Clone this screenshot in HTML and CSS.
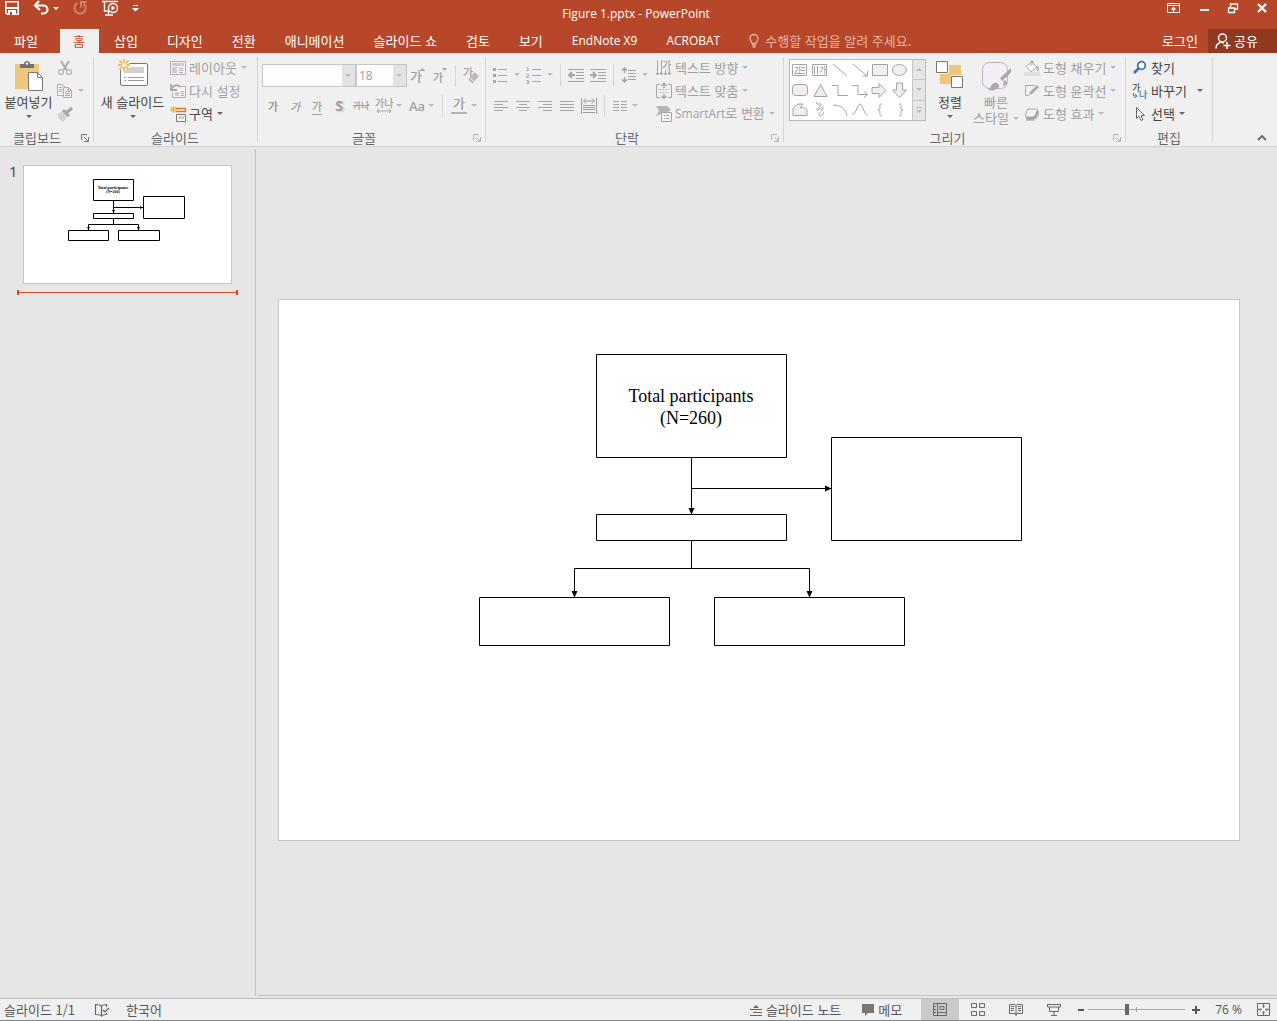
FILE: index.html
```html
<!DOCTYPE html>
<html lang="ko">
<head>
<meta charset="utf-8">
<meta name="viewport" content="width=device-width, initial-scale=1">
<title>Figure 1.pptx - PowerPoint</title>
<link rel="stylesheet" href="styles.css">
</head>
<body>
<header class="app-header">
  <div class="title-bar">
    <div class="quick-access">
      <button class="qa-btn" aria-label="저장"><svg width="16" height="16" viewBox="0 0 16 16"><path d="M1.800 1.800h12.400v12.400H3.200L1.800 12.800z" fill="none" stroke="#fff" stroke-width="1.600"/><path d="M1 7h14v2H1zM4 10h8v5H4z" fill="#fff"/><path d="M6 12h2v3H6z" fill="#b7472a"/></svg></button>
      <button class="qa-btn undo" aria-label="실행 취소"><svg width="16" height="16" viewBox="0 0 16 16"><path d="M6 1L2 5.500 7 10M2.500 5.500h8a4 4 0 0 1 0 8H8" fill="none" stroke="#fff" stroke-width="2.200"/></svg><i class="caret white"></i></button>
      <button class="qa-btn" disabled aria-label="다시 실행"><svg width="16" height="16" viewBox="0 0 16 16"><path d="M5.500 3A5.600 5.600 0 1 0 11.500 3.500M9 7.500V2h5.500" fill="none" stroke="#d0806c" stroke-width="2"/></svg></button>
      <button class="qa-btn" aria-label="슬라이드 쇼 시작"><svg width="18" height="16" viewBox="0 0 18 16"><path d="M1 1.500h16M3.500 2v9h5M7.500 11v3M4 15h8" fill="none" stroke="#fff" stroke-width="1.400"/><circle cx="12" cy="8" r="4.500" fill="#b7472a" stroke="#fff" stroke-width="1.300"/><path d="M10.500 5.500l4 2.500-4 2.500z" fill="#fff"/></svg></button>
      <button class="qa-btn" aria-label="빠른 실행 도구 모음 사용자 지정"><svg width="7" height="7" viewBox="0 0 7 7"><path d="M1 0h5v1H1zM0 3h7L3.500 6.500z" fill="#fff"/></svg></button>
    </div>
    <h1 class="window-title">Figure 1.pptx - PowerPoint</h1>
    <div class="window-controls">
      <button aria-label="리본 메뉴 표시 옵션"><svg width="14" height="12" viewBox="0 0 14 12"><path d="M.5 1.500h12v9H.5zM.5 3.500h12" fill="none" stroke="#fff"/><path d="M6.500 10V5.500M4.500 7.500l2-2 2 2" fill="none" stroke="#fff" stroke-width="1.200"/></svg></button>
      <button aria-label="최소화"><svg width="12" height="12" viewBox="0 0 12 12"><path d="M2 7h9v2H2z" fill="#fff"/></svg></button>
      <button aria-label="이전 크기로 복원"><svg width="12" height="12" viewBox="0 0 12 12"><path d="M3.500 5V2h7v5H8M3 2h8M1.500 6h6v4.500h-6zM1 5.800h7" fill="none" stroke="#fff" stroke-width="1.300"/></svg></button>
      <button aria-label="닫기"><svg width="12" height="12" viewBox="0 0 12 12"><path d="M2 2l8 8M10 2l-8 8" stroke="#fff" stroke-width="2.300"/></svg></button>
    </div>
  </div>
  <nav class="tabs" aria-label="리본 탭">
    <button class="tab file">파일</button>
    <button class="tab active">홈</button>
    <button class="tab">삽입</button>
    <button class="tab">디자인</button>
    <button class="tab">전환</button>
    <button class="tab">애니메이션</button>
    <button class="tab">슬라이드 쇼</button>
    <button class="tab">검토</button>
    <button class="tab">보기</button>
    <button class="tab latin">EndNote X9</button>
    <button class="tab latin">ACROBAT</button>
    <button class="tab tell-me"><svg width="10" height="14" viewBox="0 0 10 14"><path d="M3.200 9.500C3 8 1 7 1 4.500a4 4 0 0 1 8 0C9 7 7 8 6.800 9.500zM3 11.200h4M3.500 13h3" fill="none" stroke="#eab5a6" stroke-width="1.300"/></svg>수행할 작업을 알려 주세요.</button>
    <button class="tab login">로그인</button>
    <button class="tab share"><svg width="16" height="16" viewBox="0 0 16 16"><circle cx="7.500" cy="5" r="4" fill="none" stroke="#fff" stroke-width="1.500"/><path d="M1 15.500c0-3 2-5.500 5-6.500l3 1M8.500 12.500h7M12 9v7" fill="none" stroke="#fff" stroke-width="1.500"/></svg>공유</button>
  </nav>
</header>

<section class="ribbon" aria-label="홈 리본">
  <div class="group clipboard">
    <div class="group-body">
      <button class="big"><svg width="32" height="32" viewBox="0 0 32 32"><path d="M2 4h24v25H2z" fill="#eec77e"/><path d="M7 8V4h4c0-4 6-4 6 0h4v4z" fill="#707070"/><circle cx="14" cy="3.500" r="1.200" fill="#f0f0f0"/><path d="M15.500 12.500h9l5 5v13h-14z" fill="#fff" stroke="#777"/><path d="M24.500 12.500v5h5" fill="none" stroke="#777"/></svg><span>붙여넣기</span><i class="caret"></i></button>
      <div class="stack">
        <button class="row" disabled aria-label="잘라내기"><svg width="16" height="16" viewBox="0 0 16 16"><path d="M4 1l5.500 9M12 1L6.500 10" stroke="#aaa" stroke-width="2"/><circle cx="4" cy="12" r="2.400" fill="none" stroke="#b4b4b4" stroke-width="1.300"/><circle cx="12" cy="12" r="2.400" fill="none" stroke="#b4b4b4" stroke-width="1.300"/></svg></button>
        <button class="row" disabled aria-label="복사"><svg width="16" height="16" viewBox="0 0 16 16"><g fill="#f5eff5" stroke="#b0a9b0"><path d="M.5 1.500h5l3 3v8h-8z"/><path d="M6.500 4.500h5l3 3v7h-8z"/></g><path d="M2 4.500h3M2 6.500h3M2 8.500h3M8 8.500h5M8 10.500h5M8 12.500h5M11.500 4.500v3h3" fill="none" stroke="#b0a9b0"/></svg><i class="caret"></i></button>
        <button class="row" disabled aria-label="서식 복사"><svg width="16" height="16" viewBox="0 0 16 16"><path d="M1 8l5-3 5 5-5 6-5-4z" fill="#d4d0d4"/><path d="M6 4l6 6M9 7l6-5" stroke="#a6a6a6" stroke-width="3"/></svg></button>
      </div>
    </div>
    <div class="group-foot"><span>클립보드</span><button class="launcher on" aria-label="클립보드 창"><svg width="8" height="8" viewBox="0 0 8 8"><path d="M.5 6V.5H6M3 3l4 4M7.500 3v4.500H3" fill="none" stroke="currentColor"/></svg></button></div>
  </div>

  <div class="group slides">
    <div class="group-body">
      <button class="big"><svg width="32" height="32" viewBox="0 0 32 32"><rect x="3.500" y="3.500" width="27" height="22" rx="1.500" fill="#fff" stroke="#777"/><path d="M7 7h20v6H7z" fill="#d0d0d0"/><path d="M7 17.500h2M11 17.500h16M7 20.500h2M11 20.500h16" stroke="#999"/><circle cx="7" cy="5" r="6" fill="#f0f0f0"/><path d="M7-1v12M1 5h12M2.500.5l9 9M11.500.5l-9 9" stroke="#ecc06c" stroke-width="2"/><circle cx="7" cy="5" r="2" fill="#fff"/></svg><span>새 슬라이드</span><i class="caret"></i></button>
      <div class="stack">
        <button class="row" disabled><svg width="16" height="16" viewBox="0 0 16 16"><path d="M.5 1.500h15v13H.5z" fill="#f7f2f7" stroke="#b4aeb4"/><path d="M2 3h12v3H2zM2 7h5v6H2z" fill="#cfc8cf"/><path d="M9 8.500h4M9 10.500h4M9 12.500h4" stroke="#b4aeb4"/></svg><span>레이아웃</span><i class="caret"></i></button>
        <button class="row" disabled><svg width="16" height="16" viewBox="0 0 16 16"><path d="M9 3.500h6.500v11h-13V9" fill="#f7f2f7" stroke="#b4aeb4"/><path d="M5 9h4v4H5z" fill="#cfc8cf"/><path d="M11 8.500h3M11 10.500h3M11 12.500h3" stroke="#b4aeb4"/><path d="M1 1v6h6M1.500 6c2-4 6-5 9-2" fill="none" stroke="#aaa" stroke-width="1.800"/></svg><span>다시 설정</span></button>
        <button class="row"><svg width="16" height="16" viewBox="0 0 16 16"><path d="M6 2.500h9.500v3H6" fill="none" stroke="#e0792c" stroke-width="1.300"/><path d="M6.500 8.500h9v7h-9z" fill="#fff" stroke="#777"/><path d="M8 10h6v3H8z" fill="#d0d0d0"/><path d="M3.500 0v7M0 3.500h7M1 1l5 5M6 1L1 6" stroke="#e9b65a" stroke-width="1.100"/></svg><span>구역</span><i class="caret"></i></button>
      </div>
    </div>
    <div class="group-foot"><span>슬라이드</span></div>
  </div>

  <div class="group font">
    <div class="group-body two-rows">
      <div class="tools">
        <label class="combo family"><select disabled aria-label="글꼴"><option></option></select></label>
        <label class="combo size"><select disabled aria-label="글꼴 크기"><option>18</option></select></label>
        <button class="tool" disabled aria-label="글꼴 크기 크게"><svg width="16" height="18" viewBox="0 0 16 18"><text x="0" y="14" class="glyph g12">가</text><path d="M10 4h5l-2.500-3z" fill="#a6a6a6"/></svg></button>
        <button class="tool" disabled aria-label="글꼴 크기 작게"><svg width="16" height="18" viewBox="0 0 16 18"><text x="1" y="15" class="glyph g11">가</text><path d="M10 1h5l-2.500 3z" fill="#a6a6a6"/></svg></button>
        <i class="sep"></i>
        <button class="tool" disabled aria-label="모든 서식 지우기"><svg width="18" height="18" viewBox="0 0 18 18"><text x="1" y="10" class="glyph g11">가</text><path d="M6 12.500l6.500-7.500 4.500 4-6.500 7.500z" fill="#bfb9bf"/><path d="M7.500 10.500l4.500 4" stroke="#f0f0f0"/></svg></button>
      </div>
      <div class="tools">
        <button class="tool text bold" disabled aria-label="굵게">가</button>
        <button class="tool text italic" disabled aria-label="기울임꼴">가</button>
        <button class="tool text under" disabled aria-label="밑줄">가</button>
        <button class="tool text shadow" disabled aria-label="텍스트 그림자">S</button>
        <button class="tool text strike" disabled aria-label="취소선">가나</button>
        <button class="tool drop" disabled aria-label="문자 간격"><svg width="18" height="18" viewBox="0 0 18 18"><text x="0" y="10" class="glyph g10">가나</text><path d="M2 14h14M4 12l-2 2 2 2M14 12l2 2-2 2" fill="none" stroke="#a6a6a6"/></svg><i class="caret"></i></button>
        <button class="tool drop" disabled aria-label="대/소문자 바꾸기"><b class="aa">Aa</b><i class="caret"></i></button>
        <i class="sep"></i>
        <button class="tool drop" disabled aria-label="글꼴 색"><svg width="18" height="18" viewBox="0 0 18 18"><text x="3" y="11" class="glyph g12">가</text><path d="M1 15h16v2H1z" fill="#b4b4b4"/></svg><i class="caret"></i></button>
      </div>
    </div>
    <div class="group-foot"><span>글꼴</span><button class="launcher" disabled aria-label="글꼴 대화 상자"><svg width="8" height="8" viewBox="0 0 8 8"><path d="M.5 6V.5H6M3 3l4 4M7.500 3v4.500H3" fill="none" stroke="currentColor"/></svg></button></div>
  </div>

  <div class="group paragraph">
    <div class="group-body">
      <div class="two-rows">
        <div class="tools">
          <button class="tool drop" disabled aria-label="글머리 기호"><svg width="16" height="16" viewBox="0 0 16 16"><path d="M0 1h3v3H0zM0 7h3v3H0zM0 13h3v3H0z" fill="#a6a6a6"/><path d="M5 2.500h9M5 8.500h9M5 14.500h9" stroke="#a6a6a6"/></svg><i class="caret"></i></button>
          <button class="tool drop" disabled aria-label="번호 매기기"><svg width="16" height="18" viewBox="0 0 16 18"><text x="0" y="5" class="glyph g7">1</text><text x="0" y="12" class="glyph g7">2</text><text x="0" y="18" class="glyph g7">3</text><path d="M6 3.500h9M6 9.500h9M6 15.500h9" stroke="#a6a6a6"/></svg><i class="caret"></i></button>
          <i class="sep"></i>
          <button class="tool" disabled aria-label="목록 수준 줄임"><svg width="16" height="14" viewBox="0 0 16 14"><path d="M0 1.500h16M8 4.500h8M8 7.500h8M8 10.500h8M0 13.500h16" stroke="#a6a6a6"/><path d="M7 7H2M4 4L1 7l3 3" fill="none" stroke="#a6a6a6" stroke-width="1.800"/></svg></button>
          <button class="tool" disabled aria-label="목록 수준 늘림"><svg width="16" height="14" viewBox="0 0 16 14"><path d="M0 1.500h16M8 4.500h8M8 7.500h8M8 10.500h8M0 13.500h16" stroke="#a6a6a6"/><path d="M0 7h5M3 4l3 3-3 3" fill="none" stroke="#a6a6a6" stroke-width="1.800"/></svg></button>
          <i class="sep"></i>
          <button class="tool drop" disabled aria-label="줄 간격"><svg width="16" height="16" viewBox="0 0 16 16"><path d="M3.500 1v5M1 3.500L3.500 1 6 3.500M3.500 10v5M1 12.500L3.500 15 6 12.500" fill="none" stroke="#a6a6a6" stroke-width="1.500"/><path d="M7 3.500h8M7 6.500h8M7 9.500h8M7 12.500h8" stroke="#a6a6a6"/></svg><i class="caret"></i></button>
        </div>
        <div class="tools">
          <button class="tool" disabled aria-label="왼쪽 맞춤"><svg width="14" height="12" viewBox="0 0 14 12"><path d="M0 1.500h14M0 4.500h9M0 7.500h14M0 10.500h9" stroke="#a6a6a6"/></svg></button>
          <button class="tool" disabled aria-label="가운데 맞춤"><svg width="14" height="12" viewBox="0 0 14 12"><path d="M0 1.500h14M3 4.500h8M0 7.500h14M3 10.500h8" stroke="#a6a6a6"/></svg></button>
          <button class="tool" disabled aria-label="오른쪽 맞춤"><svg width="14" height="12" viewBox="0 0 14 12"><path d="M0 1.500h14M5 4.500h9M0 7.500h14M5 10.500h9" stroke="#a6a6a6"/></svg></button>
          <button class="tool" disabled aria-label="양쪽 맞춤"><svg width="14" height="12" viewBox="0 0 14 12"><path d="M0 1.500h14M0 4.500h14M0 7.500h14M0 10.500h14" stroke="#a6a6a6"/></svg></button>
          <button class="tool" disabled aria-label="균등 분할"><svg width="16" height="16" viewBox="0 0 16 16"><path d="M.5 0v16M15.500 0v16M2 7.500h12M2 9.500h12M2 11.500h12M2 14.500h12M3 3h10M5 .5L2.500 3 5 5.500M11 .5L13.500 3 11 5.500" fill="none" stroke="#9e9a9e"/></svg></button>
          <i class="sep"></i>
          <button class="tool drop" disabled aria-label="열 추가 또는 제거"><svg width="14" height="12" viewBox="0 0 14 12"><path d="M0 1.500h6M8 1.500h6M0 4.500h6M8 4.500h6M0 7.500h6M8 7.500h6M0 10.500h6M8 10.500h6" stroke="#a6a6a6"/></svg><i class="caret"></i></button>
        </div>
      </div>
      <div class="stack">
        <button class="row" disabled><svg width="16" height="16" viewBox="0 0 16 16"><path d="M1.500 0v15M5.500 0v15M9.500 10v5M13.500 10v5M0 13l1.500 2L3 13M4 13l1.500 2L7 13M8 13l1.500 2 1.500-2M12 13l1.500 2 1.500-2" fill="none" stroke="#a6a6a6"/><text x="6" y="9" class="glyph g10">가</text></svg><span>텍스트 방향</span><i class="caret"></i></button>
        <button class="row" disabled><svg width="16" height="16" viewBox="0 0 16 16"><path d="M4 1.500H.5v13H4M12 1.500h3.500v13H12" fill="none" stroke="#a9a3a9"/><path d="M8 0v5M5.500 3L8 .5 10.500 3M8 11v5M5.500 13L8 15.500 10.500 13" fill="none" stroke="#a6a6a6" stroke-width="1.400"/><path d="M3 6.500h10M3 9.500h10" stroke="#bbb" stroke-dasharray="2 1"/></svg><span>텍스트 맞춤</span><i class="caret"></i></button>
        <button class="row" disabled><svg width="16" height="16" viewBox="0 0 16 16"><path d="M0 0h11l4 4-3 2H5v2L0 10l3-5z" fill="#b4b4b4"/><path d="M5.500 6.500h10v9h-10z" fill="#f7f0f7" stroke="#a9a3a9"/><path d="M8 9.500h1M10 9.500h3M8 12.500h1M10 12.500h3" stroke="#a9a3a9"/></svg><span><span class="latin">SmartArt</span>로 변환</span><i class="caret"></i></button>
      </div>
    </div>
    <div class="group-foot"><span>단락</span><button class="launcher" disabled aria-label="단락 대화 상자"><svg width="8" height="8" viewBox="0 0 8 8"><path d="M.5 6V.5H6M3 3l4 4M7.500 3v4.500H3" fill="none" stroke="currentColor"/></svg></button></div>
  </div>

  <div class="group drawing">
    <div class="group-body">
      <div class="gallery">
        <svg width="122" height="60" viewBox="0 0 122 60" role="img" aria-label="도형">
          <g fill="none" stroke="#a6a2a6">
            <path d="M2.500 4.500h14v11h-14zM11 7.500h4M11 10.500h4M4 13.500h11M22.500 4.500h14v11h-14zM24.500 6v8M27.500 6v8M43 4l14 12M63 4l14 12M77.500 11v5h-5"/>
            <g fill="#f3ecf5"><path d="M82.500 4.500h15v11h-15z"/><ellipse cx="109.500" cy="10" rx="7" ry="5.500"/><rect x="2.500" y="24.500" width="15" height="11" rx="3"/><path d="M24 36.500L30.500 24.500 37 36.500zM82 27.500h7v-4l7 7-7 7v-4h-7zM106.500 23v7h-4l7 7.500 7-7.500h-4v-7z"/><path d="M3 55.500V48l5-4h5l-3 4c3-1 7 0 7 3v4.500z"/></g>
            <path d="M42 25.500h6v10h10M62 25.500h6v9h9M74 31.500l3.500 3-3.500 3M27 42c-3 5 7-1 3 4-4 4-5 6 1 2 6-3-2 5-2 7 1 2 6-1 4-3M43 45c8 0 13 4 14 11M62 54c5 0 5-10 8-10s4 12 8 11"/>
            <path d="M92 44c-3 0-2 1-2 3s0 2-2 3c2 0 2 2 2 3s-1 3 2 3M109 44c3 0 2 1 2 3s0 2 2 3c-2 0-2 2-2 3s1 3-2 3"/>
          </g>
          <text x="4" y="13" class="glyph g8">가</text><text x="29" y="13" class="glyph g8">가</text>
        </svg>
        <div class="scroller">
          <button disabled aria-label="위로"><i class="caret up"></i></button>
          <button disabled aria-label="아래로"><i class="caret"></i></button>
          <button class="more" disabled aria-label="자세히"><i class="bar"></i><i class="caret"></i></button>
        </div>
      </div>
      <button class="big arrange"><svg width="32" height="32" viewBox="0 0 32 32"><path d="M15 5h12v10H15zM6 14h11v10H6z" fill="#eec77e"/><path d="M2.500 1.500h11v11h-11zM17.500 16.500h11v11h-11z" fill="#fff" stroke="#777"/></svg><span>정렬</span><i class="caret"></i></button>
      <button class="big styles" disabled><svg width="32" height="32" viewBox="0 0 32 32"><rect x="2.500" y="2.500" width="25" height="26" rx="7" fill="#f3eef5" stroke="#b9b3b9"/><path d="M31 8L20 18l2 3c4-3 8-7 9-9zM8 30c3-2 3-6 6-7 3-1 6 2 5 4-2 3-7 4-11 3zM24 20c4 1 4 5-1 6" fill="#aaa"/></svg><span>빠른</span><span class="with-caret">스타일<i class="caret"></i></span></button>
      <div class="stack">
        <button class="row" disabled><svg width="16" height="16" viewBox="0 0 16 16"><path d="M2 6.500L8 2l5 5-6 5z" fill="#fff" stroke="#aaa"/><path d="M7 6V1h2v4M13 6c2 1 2 3 1 5-1-1-1-3-1-5z" fill="none" stroke="#aaa"/><path d="M0 12h16v4H0z" fill="#e4dde4"/></svg><span>도형 채우기</span><i class="caret"></i></button>
        <button class="row" disabled><svg width="16" height="16" viewBox="0 0 16 16"><path d="M11 2.500H1.500v10H5" fill="none" stroke="#aaa"/><path d="M5 12l1-3 7-7 2 2-7 7z" fill="#aaa"/></svg><span>도형 윤곽선</span><i class="caret"></i></button>
        <button class="row" disabled><svg width="16" height="16" viewBox="0 0 16 16"><path d="M5 5h10v5l-5 5H2z" fill="#c6c2c6"/><path d="M4 3h8q2 0 1.500 2L12 9q-.5 2-2.500 2H3q-2 0-1.500-2L2.500 5Q3 3 5 3z" fill="#f4eff4" stroke="#aaa"/><path d="M2 12q6 2 9-1l3-6" fill="none" stroke="#a0a0a0" stroke-width="2"/></svg><span>도형 효과</span><i class="caret"></i></button>
      </div>
    </div>
    <div class="group-foot"><span>그리기</span><button class="launcher" disabled aria-label="도형 서식"><svg width="8" height="8" viewBox="0 0 8 8"><path d="M.5 6V.5H6M3 3l4 4M7.500 3v4.500H3" fill="none" stroke="currentColor"/></svg></button></div>
  </div>

  <div class="group editing">
    <div class="group-body">
      <div class="stack">
        <button class="row"><svg width="16" height="16" viewBox="0 0 16 16"><circle cx="9.500" cy="5.500" r="3.800" fill="#fff" stroke="#3c76b4" stroke-width="1.800"/><path d="M6.500 8.500L2 13" stroke="#3c76b4" stroke-width="2.600"/></svg><span>찾기</span></button>
        <button class="row replace"><svg width="16" height="16" viewBox="0 0 16 16"><text x="0" y="8" class="glyph g9 dark">가</text><text x="7" y="15" class="glyph g9 blue">나</text><path d="M1.500 10v3h3M3 11l2 2-2 2" fill="none" stroke="#3c76b4"/></svg><span>바꾸기</span><i class="caret"></i></button>
        <button class="row"><svg width="16" height="16" viewBox="0 0 16 16"><path d="M4.500 1.500v11L7 10l2 4.500 2-1L9 9.500h3.500z" fill="#fff" stroke="#666"/></svg><span>선택</span><i class="caret"></i></button>
      </div>
    </div>
    <div class="group-foot"><span>편집</span></div>
  </div>
  <button class="collapse" aria-label="리본 메뉴 축소"><svg width="10" height="6" viewBox="0 0 10 6"><path d="M1 5l4-4 4 4" fill="none" stroke="#666" stroke-width="1.800"/></svg></button>
</section>

<main class="workspace">
  <aside class="thumbs" aria-label="슬라이드 목록">
    <span class="thumb-number">1</span>
    <a class="thumb" href="#slide" aria-label="슬라이드 1">
      <svg viewBox="0 0 207 117">
        <g fill="none" stroke="#000"><path d="M69.500 13.500h40v21h-40zM119.500 30.500h41v22h-41zM69.500 47.500h40v5h-40zM44.500 64.500h40v10h-40zM94.500 64.500h41v10h-41zM89.500 34.500v13M89.500 41.500h30M89.500 52.500v6M64.500 64v-5.500h50V64"/></g>
        <path d="M88 44h3l-1.500 3zM116 40v3l3-1.500zM63 61h3l-1.500 3zM113 61h3l-1.500 3z"/>
        <text x="89" y="23" class="thumb-text">Total participants</text><text x="89" y="27" class="thumb-text">(N=260)</text>
      </svg>
    </a>
    <span class="insert-mark"></span>
  </aside>
  <section class="canvas">
    <div class="slide" id="slide">
      <svg viewBox="0 0 960 540">
        <g fill="none" stroke="#000"><path d="M317.500 54.500h190v103h-190zM552.500 137.500h190v103h-190zM317.500 214.500h190v26h-190zM200.500 297.500h190v48h-190zM435.500 297.500h190v48h-190zM412.500 157.500v57M412.500 188.500h140M412.500 240.500v28M295.500 297v-28.500h235V297"/></g>
        <path d="M409.500 208h6l-3 6.500zM546 185.500v6l6.500-3zM292.500 291h6l-3 6.500zM527.500 291h6l-3 6.500z"/>
        <text x="412" y="102" class="slide-text">Total participants</text><text x="412" y="124" class="slide-text">(N=260)</text>
      </svg>
    </div>
  </section>
</main>

<footer class="status-bar">
  <span>슬라이드 1/1</span>
  <button class="spell" aria-label="맞춤법 검사"><svg width="16" height="14" viewBox="0 0 16 14"><path d="M7.500 12.500V3C6 1.500 4 1.500 1.500 1.500v10c3 0 5 0 6 1.500 1-1 2-1.500 5-1.500V10M7.500 3C9 1.500 10 1.500 12.500 1.500V4M9 7l2 2 4-4" fill="none" stroke="#666" stroke-width="1.200"/></svg></button>
  <button class="lang">한국어</button>
  <div class="status-right">
    <button class="label-btn"><svg width="12" height="12" viewBox="0 0 12 12"><path d="M0 5.500h12M3 8.500h9M0 11.500h12" stroke="#666"/><path d="M3 4h6L6 1z" fill="#666"/></svg>슬라이드 노트</button>
    <button class="label-btn memo"><svg width="12" height="12" viewBox="0 0 12 12"><path d="M0 0h12v9H6l-3 3V9H0z" fill="#777"/></svg>메모</button>
    <button class="view on" aria-label="기본"><svg width="14" height="14" viewBox="0 0 14 14"><path d="M.5.500h13v12H.5zM4.500.5v12M7 3.500h4v3H7zM5 9.500h8M1 3.500h2M1 6.500h2M1 9.500h2" fill="none" stroke="#6a6a6a"/></svg></button>
    <button class="view" aria-label="여러 슬라이드"><svg width="14" height="14" viewBox="0 0 14 14"><path d="M.5.500h5v4h-5zM8.500.5h5v4h-5zM.5 8.500h5v4h-5zM8.500 8.500h5v4h-5z" fill="none" stroke="#6a6a6a"/></svg></button>
    <button class="view" aria-label="읽기용 보기"><svg width="14" height="14" viewBox="0 0 14 14"><path d="M.5 1.500H6L7 2.500 8 1.500h5.500v9H8L7 12.500 6 10.500H.5zM7 2v10M2 3.500h3M2 5.500h3M2 7.500h3M9 3.500h3M9 5.500h3M9 7.500h3" fill="none" stroke="#6a6a6a"/></svg></button>
    <button class="view" aria-label="슬라이드 쇼"><svg width="14" height="14" viewBox="0 0 14 14"><path d="M0 1.500h14M.5 1v3h13V1M2.500 4v4.500h9V4M7 8.500v4M4 12.500h6" fill="none" stroke="#6a6a6a"/></svg></button>
    <button class="zoom-btn" aria-label="축소"><svg width="8" height="8" viewBox="0 0 8 8"><path d="M1 3h6v2H1z" fill="#555"/></svg></button>
    <input class="zoom" type="range" min="0" max="100" value="39" aria-label="확대/축소">
    <button class="zoom-btn" aria-label="확대"><svg width="8" height="8" viewBox="0 0 8 8"><path d="M0 3h8v2H0zM3 0h2v8H3z" fill="#555"/></svg></button>
    <button class="percent">76 %</button>
    <button class="fit" aria-label="현재 창 크기에 맞춤"><svg width="14" height="14" viewBox="0 0 14 14"><path d="M.5.500h12v12H.5z" fill="none" stroke="#666"/><path d="M6.500 1v4M1 6.500h4M8 6.500h4M6.500 8v4M5.500 3.500L6.500 2l1 1.500M5.500 9.500l1 1.500 1-1.500M3.500 5.500L2 6.500l1.500 1M9.500 5.500l1.500 1-1.500 1" fill="none" stroke="#777"/></svg></button>
  </div>
</footer>
</body>
</html>
```
FILE: styles.css
```css
* { box-sizing: border-box; }

body {
  margin: 0;
  min-height: 100vh;
  display: flex;
  flex-direction: column;
  background: #e6e6e6;
  color: #444;
  font: 13px/16px "Noto Sans CJK KR", "Open Sans", sans-serif;
}

button {
  margin: 0;
  padding: 0;
  border: 0;
  background: none;
  color: inherit;
  font: inherit;
  white-space: nowrap;
  display: flex;
  align-items: center;
}

button:disabled { color: #a0a0a0; }
svg { display: block; flex: none; overflow: visible; }

/* Title bar and tabs */
.app-header { background: #b7472a; color: #fff; }

.title-bar {
  display: grid;
  grid-template-columns: 1fr auto 1fr;
  height: 29px;
  padding: 0 9px 0 4px;
}

.quick-access { display: flex; gap: 13px; align-items: flex-start; }
.qa-btn { height: 16px; }
.undo { gap: 4px; }

.window-title {
  margin: 0;
  padding-top: 5px;
  font: 12px/18px "Open Sans", sans-serif;
}

.window-controls {
  display: flex;
  justify-content: flex-end;
  gap: 17px;
  height: 16px;
}

.tabs { display: flex; height: 24px; }
.tab { padding: 0 14px 0 15px; }
.file { width: 60px; padding-left: 14px; }
.active { padding: 0 14px 0 13px; background: #f0f0f0; color: #d24726; }
.latin { font-family: "Open Sans", sans-serif; font-size: 12px; }
.tell-me { gap: 6px; color: #eab5a6; }
.login { margin-left: auto; padding-right: 10px; }
.share { width: 69px; padding: 0 0 0 7px; gap: 3px; background: #903820; }

/* Ribbon */
.ribbon {
  display: flex;
  height: 94px;
  background: #f0f0f0;
  border-bottom: 1px solid #d2d2d2;
}

.group {
  display: flex;
  flex-direction: column;
  padding-top: 3px;
  background: linear-gradient(#d5d5d5, #d5d5d5) right 4px / 1px 85px no-repeat;
}

.clipboard { width: 94px; }
.slides { width: 164px; padding-left: 5px; }
.font { width: 228px; padding-left: 4px; }
.paragraph { width: 298px; padding-left: 4px; }
.drawing { width: 342px; padding-left: 5px; }
.editing { width: 87px; padding-left: 6px; }

.group-body { display: flex; flex: 1; }
.group-foot { display: flex; align-items: center; height: 16px; color: #666; }
.group-foot span { flex: 1; padding-right: 7px; text-align: center; }
.launcher { width: 13px; }
.launcher:disabled { color: #b4b4b4; }
.launcher.on { color: #777; }

.caret {
  width: 0;
  height: 0;
  border: 3px solid transparent;
  border-top-color: #666;
  border-bottom: 0;
}

button:disabled .caret { border-top-color: #bbb; }
.caret.white { border-top-color: #fff; }

.big {
  flex-direction: column;
  padding-top: 4px;
  line-height: 20px;
}

.clipboard .big { width: 57px; }
.slides .big { width: 67px; }
.big > .caret { margin-top: 3px; }
.arrange { width: 48px; }
.styles { width: 44px; line-height: 16px; }
.styles span:first-of-type { padding-top: 2px; }
.with-caret { display: flex; align-items: center; gap: 4px; }

.slides .stack { margin-left: 4px; }
.drawing .stack { margin-left: 6px; }

.row { height: 23px; gap: 3px; }
.row span + .caret { margin-left: 1px; }
.clipboard .row { gap: 5px; }
.row.replace span + .caret { margin-left: 7px; }

.two-rows {
  display: flex;
  flex-direction: column;
  gap: 8px;
  padding-top: 7px;
}

.tools { display: flex; align-items: center; height: 23px; }

.combo {
  position: relative;
  height: 23px;
}

.combo select {
  appearance: none;
  width: 100%;
  height: 100%;
  padding: 0 16px 0 2px;
  border: 1px solid #c6c6c6;
  border-radius: 0;
  background: linear-gradient(#e3e3e3, #e3e3e3) right / 13px 100% no-repeat #fdfdfd;
  color: #a0a0a0;
  opacity: 1;
  font: 12px "Open Sans", sans-serif;
}

.combo::after {
  content: "";
  position: absolute;
  right: 5px;
  top: 10px;
  border: 3px solid transparent;
  border-top-color: #bbb;
  border-bottom: 0;
}

.family { width: 94px; }
.size { width: 51px; }

.font .two-rows, .font .group-body { padding-top: 8px; gap: 7px; }

.tool { width: 22px; height: 23px; justify-content: center; }
.drop { width: 33px; gap: 3px; }
.paragraph .drop { gap: 5px; }
.sep { width: 1px; height: 22px; margin: 0 4px; background: #d5d5d5; }

.text { font-size: 11px; line-height: 14px; font-weight: 500; }
.bold { font-weight: 700; }
.italic { font-style: italic; }
.under { text-decoration: underline; text-underline-offset: 3px; }
.shadow { font: 700 14px "Open Sans", sans-serif; text-shadow: 2px 1px 1px #ccc; }
.strike { font-size: 9px; text-decoration: line-through; }
.aa { font: 600 13px "Open Sans", sans-serif; }

.glyph { fill: #a0a0a0; font-weight: 500; }
.g7 { font: 700 6px "Liberation Sans", sans-serif; }
.g8 { font-size: 8px; }
.g9 { font-size: 9px; }
.g10 { font-size: 10px; }
.g11 { font-size: 11px; }
.g12 { font-size: 13px; }
.glyph.dark { fill: #555; }
.glyph.blue { fill: #3c76b4; }

.paragraph .stack { margin-left: 5px; }
.paragraph .two-rows { width: 161px; }

.gallery {
  display: flex;
  height: 62px;
  margin-top: 3px;
  border: 1px solid #b9b9b9;
  background: #fff;
}

.scroller {
  display: grid;
  grid-template-rows: 1fr 1fr 1fr;
  width: 13px;
  background: #c6c6c6;
  row-gap: 1px;
  border-left: 1px solid #c6c6c6;
}

.scroller button { justify-content: center; background: #e6e6e6; }
.scroller .more { flex-direction: column; gap: 2px; }
.bar { width: 6px; height: 1px; background: #bbb; }
.caret.up { border: 3px solid transparent; border-top: 0; }
button:disabled .caret.up { border-bottom-color: #bbb; }
.collapse { align-self: flex-end; margin: 0 10px 5px auto; }

/* Workspace */
.workspace {
  flex: 1;
  display: grid;
  grid-template-columns: 256px 1fr;
  margin-bottom: 2px;
}

.thumbs {
  display: grid;
  grid-template-columns: 14px 209px;
  align-content: start;
  margin-top: 2px;
  padding: 16px 0 0 9px;
  border-right: 1px solid #c2c2c2;
}

.thumb-number { font: 15px/12px "Open Sans", sans-serif; }
.thumb { border: 1px solid #c6c6c6; background: #fff; }
.thumb-text { font: 700 4px "Liberation Serif", serif; text-anchor: middle; }

.insert-mark {
  grid-column: 1 / -1;
  height: 5px;
  width: 221px;
  margin: 6px 0 0 8px;
  border: solid #d24726;
  border-width: 0 2px;
  background: linear-gradient(#d24726, #d24726) center / 100% 1px no-repeat;
}

.canvas {
  display: flex;
  align-items: center;
  margin-left: 2px;
  padding: 0 37px 2px 20px;
  border-bottom: 1px solid #c2c2c2;
}

.slide { flex: 1; border: 1px solid #c6c6c6; background: #fff; }
.slide-text { font: 18px "Liberation Serif", serif; text-anchor: middle; }

/* Status bar */
.status-bar {
  display: flex;
  align-items: center;
  height: 23px;
  padding-left: 4px;
  border-top: 1px solid #bdbdbd;
  border-bottom: 1px solid #7f898d;
  background: #f0f0f0;
  color: #555;
}

.spell { margin-left: 19px; }
.lang { margin-left: 16px; }
.status-right { display: flex; align-items: center; align-self: stretch; margin-left: auto; }
.label-btn { gap: 4px; }
.memo { margin: 0 19px 0 21px; }
.view { width: 38px; height: 100%; justify-content: center; }
.on.view { background: #cacaca; }

.zoom {
  appearance: none;
  width: 97px;
  height: 12px;
  margin: 0 7px 0 3px;
  background:
    linear-gradient(#aaa, #aaa) center / 100% 1px no-repeat,
    linear-gradient(#aaa, #aaa) center / 1px 5px no-repeat;
}

.zoom::-webkit-slider-thumb {
  appearance: none;
  width: 4px;
  height: 11px;
  background: #666;
}

.zoom-btn { margin-left: 4px; }
.zoom + .zoom-btn { margin-left: 0; }
.percent { margin-left: 15px; font: 12px "Open Sans", sans-serif; }
.fit { margin: 0 6px 0 15px; }
```
